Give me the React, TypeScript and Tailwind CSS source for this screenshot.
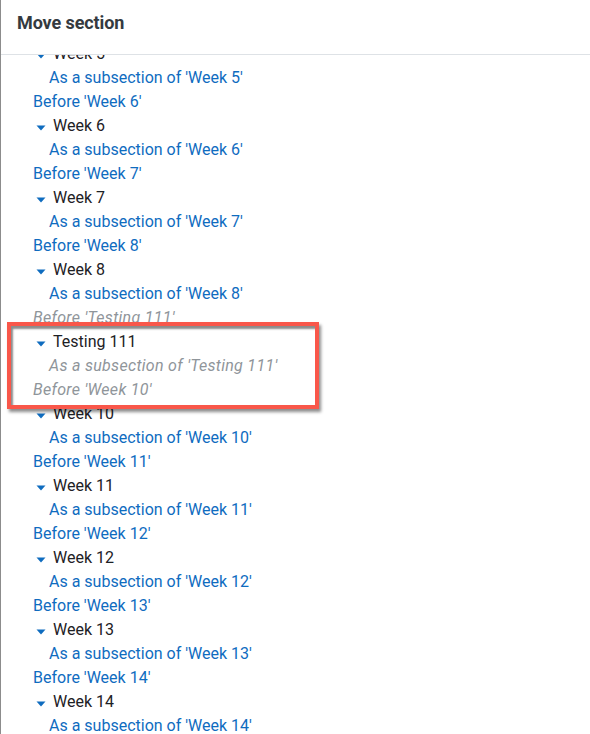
import React from "react";

type Row =
  | { kind: "section"; label: string; muted?: boolean }
  | { kind: "sub"; label: string; muted?: boolean }
  | { kind: "before"; label: string; muted?: boolean };

const weeksAfter = [10, 11, 12, 13, 14];

function buildRows(): Row[] {
  const rows: Row[] = [];
  const add = (n: string, mutedBefore = false) => {
    rows.push({ kind: "before", label: `Before '${n}'`, muted: mutedBefore });
  };
  rows.push({ kind: "section", label: "Week 5" });
  rows.push({ kind: "sub", label: "As a subsection of 'Week 5'" });
  for (const w of [6, 7, 8]) {
    add(`Week ${w}`);
    rows.push({ kind: "section", label: `Week ${w}` });
    rows.push({ kind: "sub", label: `As a subsection of 'Week ${w}'` });
  }
  add("Testing 111", true);
  rows.push({ kind: "section", label: "Testing 111" });
  rows.push({ kind: "sub", label: "As a subsection of 'Testing 111'", muted: true });
  add("Week 10", true);
  weeksAfter.forEach((w, i) => {
    if (i > 0) add(`Week ${w}`);
    rows.push({ kind: "section", label: `Week ${w}` });
    rows.push({ kind: "sub", label: `As a subsection of 'Week ${w}'` });
  });
  return rows;
}

function Caret() {
  return (
    <svg width="10" height="6" viewBox="0 0 10 6" className="mt-[3px] shrink-0">
      <path d="M0.5 0.5 L9.5 0.5 L5 5.5 Z" fill="#0f6cbf" />
    </svg>
  );
}

export default function App() {
  const rows = buildRows();
  return (
    <div
      className="relative w-[590px] h-[734px] overflow-hidden bg-white border-l border-[#8c8c8c]"
      style={{ fontFamily: "Roboto, 'Liberation Sans', sans-serif" }}
    >
      <div className="h-[55px] border-b border-[#dee2e6] flex items-center pl-[16px] pb-[10px]">
        <h5 className="text-[18px] font-bold text-[#343a40] tracking-[-0.1px]">Move section</h5>
      </div>
      <div className="h-[679px] overflow-hidden">
        <div className="mt-[-13px] flex flex-col">
          {rows.map((r, i) => {
            if (r.kind === "section") {
              return (
                <div key={i} className="h-[24px] flex items-center pl-[35px] gap-[7px] text-[16px] text-[#1d2125]">
                  <Caret />
                  <span>{r.label}</span>
                </div>
              );
            }
            const pad = r.kind === "sub" ? "pl-[48px]" : "pl-[32px]";
            const style = r.muted ? "text-[#8f959a] italic tracking-[0.3px]" : "text-[#0f6cbf]";
            return (
              <div key={i} className={`h-[24px] flex items-center text-[16px] ${pad} ${style}`}>
                {r.label}
              </div>
            );
          })}
        </div>
      </div>
      <div className="absolute left-[6px] top-[322px] w-[312px] h-[87px] border-[4px] border-[#f9574a] shadow-[2px_3px_3px_rgba(0,0,0,0.45),inset_2px_3px_2px_rgba(0,0,0,0.45)] pointer-events-none" />
    </div>
  );
}
